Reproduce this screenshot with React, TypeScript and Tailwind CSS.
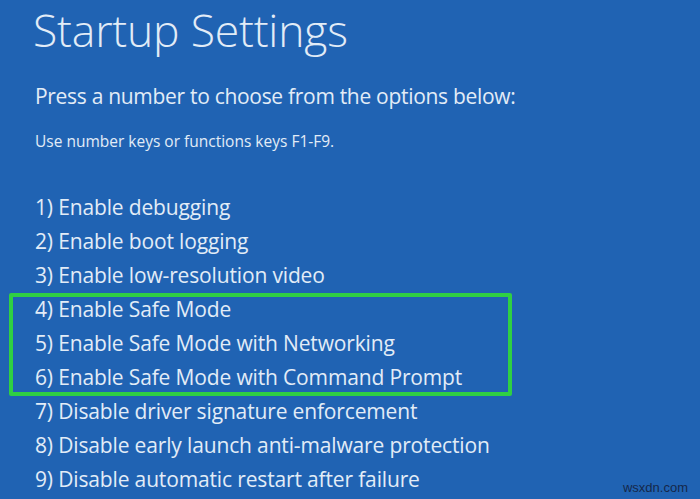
import React from "react";

const items = [
  "1) Enable debugging",
  "2) Enable boot logging",
  "3) Enable low-resolution video",
  "4) Enable Safe Mode",
  "5) Enable Safe Mode with Networking",
  "6) Enable Safe Mode with Command Prompt",
  "7) Disable driver signature enforcement",
  "8) Disable early launch anti-malware protection",
  "9) Disable automatic restart after failure",
];

function Item({ text }: { text: string }) {
  return (
    <div className="h-[34px] leading-[34px] text-[21px] tracking-[-0.15px] whitespace-nowrap">{text}</div>
  );
}

export default function App() {
  return (
    <div
      className="relative w-[700px] h-[499px] overflow-hidden bg-[#2063b3] text-[#e2ecf7]"
      style={{ fontFamily: '"Open Sans", "Noto Sans", sans-serif' }}
    >
      <div className="flex flex-col pl-[33px]">
        <div className="h-[60px] leading-[60px] text-[44.5px] font-light tracking-[-0.2px] whitespace-nowrap">
          Startup Settings
        </div>
        <div className="mt-[19px] h-[34px] leading-[34px] text-[21px] tracking-[-0.3px] pl-[2px] whitespace-nowrap">
          Press a number to choose from the options below:
        </div>
        <div className="mt-[16px] h-[24px] leading-[24px] text-[15.5px] pl-[2px] whitespace-nowrap">
          Use number keys or functions keys F1-F9.
        </div>
        <div className="mt-[37px] flex flex-col pl-[2px]">
          {items.slice(0, 3).map((t) => (
            <Item key={t} text={t} />
          ))}
          <div className="relative flex flex-col">
            {items.slice(3, 6).map((t) => (
              <Item key={t} text={t} />
            ))}
            <div className="absolute left-[-26px] top-[1px] w-[503px] h-[103px] border-4 border-[#2fd043] rounded-[2px]" />
          </div>
          {items.slice(6).map((t) => (
            <Item key={t} text={t} />
          ))}
        </div>
      </div>
      <div
        className="absolute right-[12px] bottom-[2px] text-[13px] text-[#15284a]"
        style={{ fontFamily: '"Liberation Sans", Arial, sans-serif' }}
      >
        wsxdn.com
      </div>
    </div>
  );
}
